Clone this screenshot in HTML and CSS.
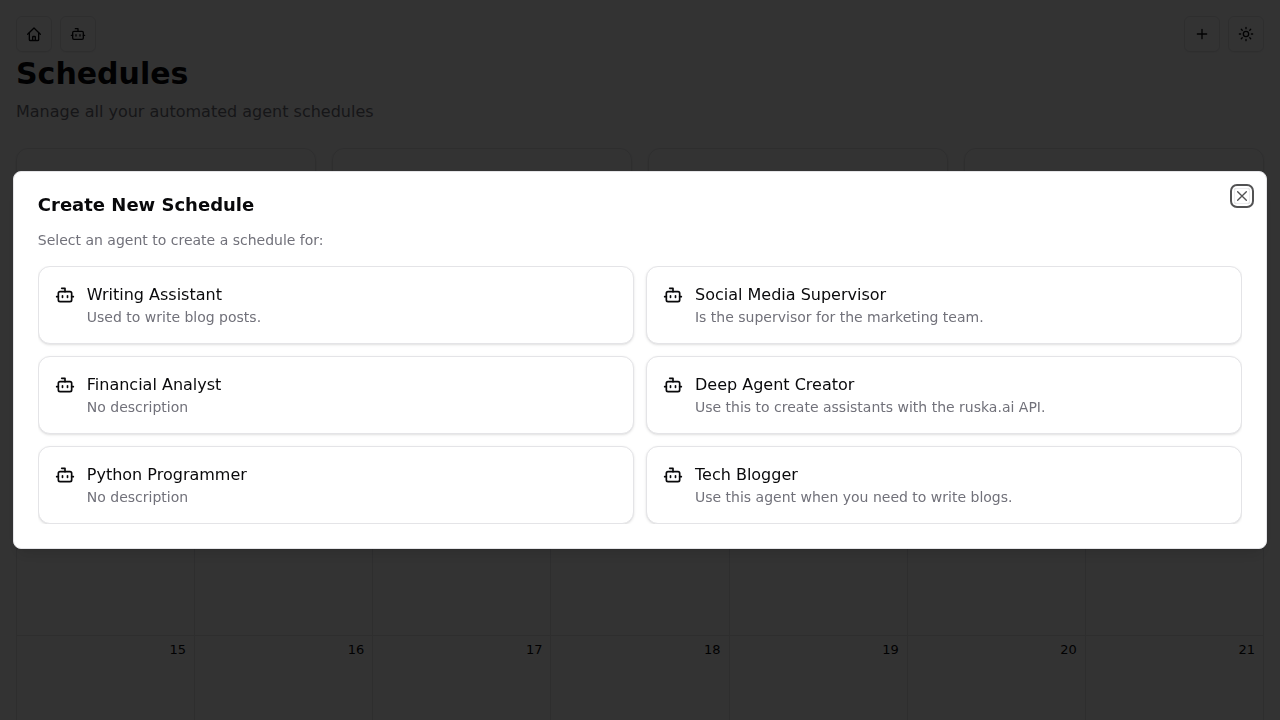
FILE: index.html
```html
<!DOCTYPE html>
<html lang="en">
<head>
<meta charset="utf-8">
<meta name="viewport" content="width=device-width, initial-scale=1">
<title>Schedules</title>
<link rel="stylesheet" href="styles.css">
</head>
<body>
<svg class="sprite" aria-hidden="true">
  <symbol id="bot" viewBox="0 0 24 24"><path d="M12 8V4H8"/><rect width="16" height="12" x="4" y="8" rx="2"/><path d="M2 14h2M20 14h2M15 13v2M9 13v2"/></symbol>
</svg>
<div class="page">
  <header class="topbar">
    <nav class="group" aria-label="Main">
      <button class="icon-button" type="button" aria-label="Home"><svg class="icon" viewBox="0 0 24 24"><path d="M2.500 12.500 12 3l9.500 9.500"/><path d="M5 10.500v10a1.300 1.300 0 0 0 1.300 1.300h11.400a1.300 1.300 0 0 0 1.300-1.300v-10"/><path d="M10 21.500v-5a.8.8 0 0 1 .8-.8h2.400a.8.8 0 0 1 .8.8v5"/></svg></button>
      <button class="icon-button" type="button" aria-label="Agents"><svg class="icon"><use href="#bot"/></svg></button>
    </nav>
    <div class="group">
      <button class="icon-button" type="button" aria-label="New schedule"><svg class="icon" viewBox="0 0 24 24"><path d="M5 12h14M12 5v14"/></svg></button>
      <button class="icon-button" type="button" aria-label="Theme"><svg class="icon" viewBox="0 0 24 24"><circle cx="12" cy="12" r="4"/><path d="M12 2v2M12 20v2M4.930 4.930l1.410 1.410M17.660 17.660l1.410 1.410M2 12h2M20 12h2M6.340 17.660l-1.410 1.410M19.070 4.930l-1.410 1.410"/></svg></button>
    </div>
  </header>
  <main>
    <h1 class="page-title">Schedules</h1>
    <p class="page-text">Manage all your automated agent schedules</p>
    <section class="stats" aria-label="Statistics">
      <div class="stat"></div><div class="stat"></div><div class="stat"></div><div class="stat"></div>
    </section>
    <table class="calendar" aria-label="Calendar">
      <tbody>
        <tr><td></td><td></td><td></td><td></td><td></td><td></td><td></td></tr>
        <tr><td></td><td></td><td></td><td></td><td></td><td></td><td></td></tr>
        <tr><td></td><td></td><td></td><td></td><td></td><td></td><td></td></tr>
        <tr><td>15</td><td>16</td><td>17</td><td>18</td><td>19</td><td>20</td><td>21</td></tr>
      </tbody>
    </table>
  </main>
</div>
<div class="overlay">
  <section class="dialog" role="dialog" aria-modal="true" aria-labelledby="dialog-title" aria-describedby="dialog-text">
    <h2 class="dialog-title" id="dialog-title">Create New Schedule</h2>
    <p class="dialog-text" id="dialog-text">Select an agent to create a schedule for:</p>
    <div class="agents">
      <button class="agent" type="button"><svg class="agent-icon"><use href="#bot"/></svg><span class="agent-body"><span class="agent-name">Writing Assistant</span><span class="agent-text">Used to write blog posts.</span></span></button>
      <button class="agent" type="button"><svg class="agent-icon"><use href="#bot"/></svg><span class="agent-body"><span class="agent-name">Social Media Supervisor</span><span class="agent-text">Is the supervisor for the marketing team.</span></span></button>
      <button class="agent" type="button"><svg class="agent-icon"><use href="#bot"/></svg><span class="agent-body"><span class="agent-name">Financial Analyst</span><span class="agent-text">No description</span></span></button>
      <button class="agent" type="button"><svg class="agent-icon"><use href="#bot"/></svg><span class="agent-body"><span class="agent-name">Deep Agent Creator</span><span class="agent-text">Use this to create assistants with the ruska.ai API.</span></span></button>
      <button class="agent" type="button"><svg class="agent-icon"><use href="#bot"/></svg><span class="agent-body"><span class="agent-name">Python Programmer</span><span class="agent-text">No description</span></span></button>
      <button class="agent" type="button"><svg class="agent-icon"><use href="#bot"/></svg><span class="agent-body"><span class="agent-name">Tech Blogger</span><span class="agent-text">Use this agent when you need to write blogs.</span></span></button>
    </div>
    <button class="close" type="button" aria-label="Close"><svg class="icon" viewBox="0 0 24 24"><path d="M18.500 5.500l-13 13M5.500 5.500l13 13"/></svg></button>
  </section>
</div>
</body>
</html>
```
FILE: styles.css
```css
*, *::before, *::after { box-sizing: border-box; }

body {
  margin: 0;
  overflow: hidden;
  background: #fff;
  color: #09090b;
  font: 16px/24px "DejaVu Sans", sans-serif;
}

h1, h2, p { margin: 0; }

button {
  font: inherit;
  color: inherit;
  cursor: pointer;
}

svg {
  display: block;
  flex: none;
  fill: none;
  stroke: currentColor;
  stroke-width: 2;
  stroke-linecap: round;
  stroke-linejoin: round;
}

.sprite { position: absolute; width: 0; height: 0; }
.icon { width: 16px; height: 16px; }

.page { height: 100vh; overflow: hidden; padding: 16px; }

.topbar { display: flex; justify-content: space-between; margin-bottom: 4px; }
.group { display: flex; gap: 8px; }

.icon-button {
  display: grid;
  place-items: center;
  width: 36px;
  height: 36px;
  padding: 0;
  border: 1px solid #e4e4e7;
  border-radius: 6px;
  background: #fff;
  box-shadow: 0 1px 2px rgb(0 0 0 / 5%);
}

.page-title { font-size: 30px; line-height: 36px; font-weight: 700; }
.page-text { margin-top: 8px; color: #71717a; }

.stats {
  display: grid;
  grid-template-columns: repeat(4, 1fr);
  gap: 16px;
  margin: 24px 0;
}

.stat {
  min-height: 109px;
  border: 1px solid #e4e4e7;
  border-radius: 12px;
  box-shadow: 0 1px 3px rgb(0 0 0 / 10%);
}

.calendar {
  width: 100%;
  table-layout: fixed;
  border-collapse: collapse;
  font-size: 13px;
  line-height: 20px;
}

.calendar td {
  height: 118px;
  padding: 4px 8px;
  border: 1px solid #e4e4e7;
  text-align: right;
  vertical-align: top;
}

.overlay {
  position: fixed;
  inset: 0;
  display: grid;
  place-items: center;
  background: rgb(0 0 0 / 80%);
}

.dialog {
  position: relative;
  display: grid;
  gap: 16px;
  width: 98vw;
  padding: 24px;
  border: 1px solid #e4e4e7;
  border-radius: 8px;
  background: #fff;
  box-shadow: 0 10px 15px -3px rgb(0 0 0 / 10%), 0 4px 6px -4px rgb(0 0 0 / 10%);
}

.dialog-title { font-size: 18px; line-height: 18px; font-weight: 600; }
.dialog-text { color: #71717a; font-size: 14px; line-height: 20px; }

.agents {
  display: grid;
  grid-template-columns: 1fr 1fr;
  gap: 12px;
  overflow: hidden;
}

.agent {
  display: flex;
  align-items: flex-start;
  gap: 12px;
  padding: 16px;
  border: 1px solid #e4e4e7;
  border-radius: 12px;
  background: #fff;
  box-shadow: 0 1px 3px rgb(0 0 0 / 10%), 0 1px 2px -1px rgb(0 0 0 / 10%);
  text-align: left;
}

.agent-icon { width: 20px; height: 20px; margin-top: 2px; }
.agent-body { display: grid; }
.agent-text { color: #71717a; font-size: 14px; line-height: 20px; }

.close {
  position: absolute;
  top: 16px;
  right: 16px;
  padding: 0;
  border: 0;
  border-radius: 3px;
  outline: 0;
  background: none;
  box-shadow: inset 0 0 0 1px #e4e4e7, 0 0 0 2px #fff, 0 0 0 4px #09090b;
  opacity: .7;
}
```
